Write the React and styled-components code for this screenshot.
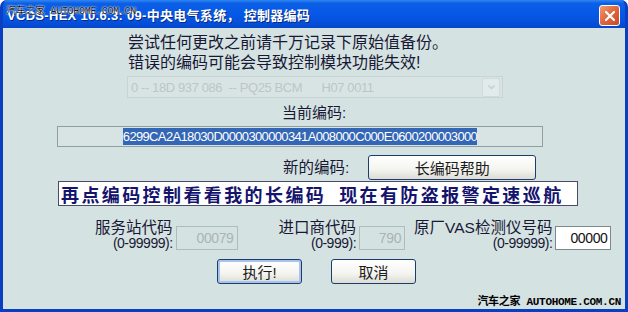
import React from "react";
import styled, { createGlobalStyle } from "styled-components";

const GlobalStyle = createGlobalStyle`
  html, body {
    margin: 0;
    padding: 0;
    background: #ffffff;
  }
  body {
    font-family: "Noto Sans CJK SC", "Liberation Sans", sans-serif;
  }
`;

const CJK = `"Liberation Sans", "Noto Sans CJK SC", sans-serif`;

function App() {
  return (
    <>
      <GlobalStyle />
      <Window>
        <TitleBar>
          <Title>VCDS-HEX 10.6.3: 09-中央电气系统， 控制器编码</Title>
          <CloseButton aria-label="close">
            <svg width="12" height="12" viewBox="0 0 12 12">
              <path
                d="M2 2 L10 10 M10 2 L2 10"
                stroke="#ffffff"
                strokeWidth="2.2"
                strokeLinecap="round"
              />
            </svg>
          </CloseButton>
          <Watermark top>汽车之家 AUTOHOME.COM.CN</Watermark>
        </TitleBar>
        <Body>
          <Notice>
            <div>尝试任何更改之前请千万记录下原始值备份。</div>
            <div>错误的编码可能会导致控制模块功能失效!</div>
          </Notice>
          <Select>
            <span>0 -- 18D 937 086&nbsp;&nbsp;-- PQ25 BCM&nbsp;&nbsp;&nbsp;&nbsp;&nbsp;&nbsp;H07 0011</span>
            <SelectArrow>
              <svg width="7" height="5" viewBox="0 0 7 5">
                <path d="M0.5 0.5 L3.5 3.5 L6.5 0.5" stroke="#c4cccc" strokeWidth="1.4" fill="none" />
              </svg>
            </SelectArrow>
          </Select>
          <Caption>当前编码:</Caption>
          <CodeField>
            <Selected>6299CA2A18030D0000300000341A008000C000E0600200003000</Selected>
          </CodeField>
          <NewCodeRow>
            <Label>新的编码:</Label>
            <HelpButton>长编码帮助</HelpButton>
          </NewCodeRow>
          <Banner>再点编码控制看看我的长编码&nbsp;&nbsp;现在有防盗报警定速巡航</Banner>
          <FieldsRow>
            <Group offset={92}>
              <LabelStack>
                <Label>服务站代码</Label>
                <Range>(0-99999):</Range>
              </LabelStack>
              <NumField width={62}>00079</NumField>
            </Group>
            <Group offset={41}>
              <LabelStack>
                <Label>进口商代码</Label>
                <Range>(0-999):</Range>
              </LabelStack>
              <NumField width={46}>790</NumField>
            </Group>
            <Group offset={9}>
              <LabelStack>
                <Label>原厂VAS检测仪号码</Label>
                <Range>(0-99999):</Range>
              </LabelStack>
              <NumField width={56} active>
                00000
              </NumField>
            </Group>
          </FieldsRow>
          <ButtonsRow>
            <PushButton primary>执行!</PushButton>
            <PushButton>取消</PushButton>
          </ButtonsRow>
          <Watermark>汽车之家 AUTOHOME.COM.CN</Watermark>
        </Body>
      </Window>
    </>
  );
}

const Window = styled.div`
  width: 628px;
  height: 312px;
  box-sizing: border-box;
  display: flex;
  flex-direction: column;
  background: #0842c8;
  border: 3px solid #0a3fc4;
  border-top: 0;
  border-radius: 7px 7px 0 0;
  overflow: hidden;
`;

const TitleBar = styled.div`
  position: relative;
  height: 28px;
  flex: none;
  margin: 0 -3px;
  padding: 0 8px 0 7px;
  display: flex;
  align-items: center;
  justify-content: space-between;
  background: linear-gradient(
    to bottom,
    #2f86f0 0%,
    #0b5fe6 12%,
    #0659e6 45%,
    #0552de 75%,
    #0447cc 100%
  );
`;

const Title = styled.span`
  color: #ffffff;
  font-family: ${CJK};
  font-weight: bold;
  font-size: 13px;
  letter-spacing: 0.3px;
  text-shadow: 1px 1px 0 #0a2a80;
  white-space: pre;
`;

const CloseButton = styled.div`
  width: 21px;
  height: 21px;
  margin-top: 3px;
  box-sizing: border-box;
  display: flex;
  align-items: center;
  justify-content: center;
  border: 1px solid #ffffff;
  border-radius: 3px;
  background: linear-gradient(135deg, #f09a74 0%, #e06a42 45%, #c84a22 100%);
`;

const Watermark = styled.span`
  position: absolute;
  ${(p) =>
    p.top
      ? `left: 6px; top: 2px; font-size: 10px; color: #1a1a1a; font-weight: normal; text-shadow: 0 0 2px #ffffff, 0 0 1px #ffffff;`
      : `right: 4px; bottom: 1px; font-size: 11px; color: #000000; font-weight: bold;`}
  font-family: "Liberation Mono", "Noto Sans CJK SC", monospace;
  letter-spacing: -0.3px;
  white-space: nowrap;
`;

const Body = styled.div`
  position: relative;
  flex: 1;
  display: flex;
  flex-direction: column;
  align-items: flex-start;
  background: #d5e2e2;
  color: #181834;
  font-family: ${CJK};
`;

const Notice = styled.div`
  margin: 5px 0 0 125px;
  font-size: 16px;
  line-height: 20px;
`;

const Select = styled.div`
  margin: 3px 0 0 124px;
  width: 376px;
  height: 22px;
  box-sizing: border-box;
  display: flex;
  align-items: center;
  justify-content: space-between;
  padding: 0 2px 0 3px;
  border: 1px solid #c8d3d3;
  background: #d8e4e4;
  color: #bcc6c6;
  font-family: "Liberation Sans", sans-serif;
  font-size: 13px;
  letter-spacing: -0.4px;
`;

const SelectArrow = styled.div`
  width: 16px;
  height: 17px;
  display: flex;
  align-items: center;
  justify-content: center;
  border: 1px solid #d0dada;
  border-radius: 2px;
  background: #e2ebeb;
`;

const Caption = styled.div`
  align-self: center;
  margin-top: 5px;
  font-size: 15px;
  line-height: 20px;
`;

const CodeField = styled.div`
  margin: 3px 0 0 54px;
  width: 486px;
  height: 21px;
  box-sizing: border-box;
  display: flex;
  align-items: center;
  justify-content: center;
  border: 1px solid #8ea0a6;
  background: #d8e4e4;
`;

const Selected = styled.span`
  background: #3366b4;
  color: #ffffff;
  font-family: "Liberation Sans", sans-serif;
  font-size: 13px;
  line-height: 17px;
  letter-spacing: -0.65px;
`;

const NewCodeRow = styled.div`
  margin: 8px 0 0 280px;
  display: flex;
  align-items: center;
  gap: 19px;
  height: 25px;
`;

const Label = styled.span`
  font-size: 15.5px;
  line-height: 17px;
  white-space: nowrap;
`;

const HelpButton = styled.div`
  width: 168px;
  height: 25px;
  box-sizing: border-box;
  display: flex;
  align-items: center;
  justify-content: center;
  border: 1px solid #1c3c6c;
  border-radius: 3px;
  background: linear-gradient(to bottom, #ffffff 0%, #f4f4ef 60%, #dcdcd4 100%);
  color: #1c1c1c;
  font-size: 15px;
`;

const Banner = styled.div`
  margin: 1px 0 0 55px;
  width: 520px;
  height: 25px;
  box-sizing: border-box;
  display: flex;
  align-items: center;
  padding-left: 2px;
  border: 1px solid #4a4a6a;
  background: #ffffff;
  color: #14146e;
  font-family: "Noto Sans CJK SC", sans-serif;
  font-weight: bold;
  font-size: 18px;
  letter-spacing: 2.4px;
  white-space: nowrap;
`;

const FieldsRow = styled.div`
  margin-top: 13px;
  display: flex;
  align-items: flex-start;
`;

const Group = styled.div`
  margin-left: ${(p) => p.offset}px;
  display: flex;
  align-items: flex-end;
  gap: 3px;
`;

const LabelStack = styled.div`
  display: flex;
  flex-direction: column;
  align-items: flex-end;
`;

const Range = styled.span`
  font-family: "Liberation Sans", sans-serif;
  font-size: 14px;
  line-height: 15px;
  letter-spacing: -0.5px;
`;

const NumField = styled.div`
  width: ${(p) => p.width}px;
  height: 24px;
  box-sizing: border-box;
  display: flex;
  align-items: center;
  justify-content: flex-end;
  padding-right: 3px;
  margin-bottom: 1px;
  border: 1px solid ${(p) => (p.active ? "#7a8a8a" : "#aebcbc")};
  background: ${(p) => (p.active ? "#ffffff" : "#d5e2e2")};
  color: ${(p) => (p.active ? "#101010" : "#aab4b4")};
  font-family: "Liberation Sans", sans-serif;
  font-size: 14px;
  letter-spacing: -0.4px;
`;

const ButtonsRow = styled.div`
  margin: 8px 0 0 214px;
  display: flex;
  gap: 29px;
`;

const PushButton = styled.div`
  width: 85px;
  height: 25px;
  box-sizing: border-box;
  display: flex;
  align-items: center;
  justify-content: center;
  border: 1px solid #1c3c6c;
  border-radius: 3px;
  background: linear-gradient(to bottom, #ffffff 0%, #f4f4ef 60%, #dcdcd4 100%);
  box-shadow: ${(p) => (p.primary ? "inset 0 0 0 2px #a8c4ee" : "none")};
  color: #1c1c1c;
  font-size: 15px;
`;

export default App;
